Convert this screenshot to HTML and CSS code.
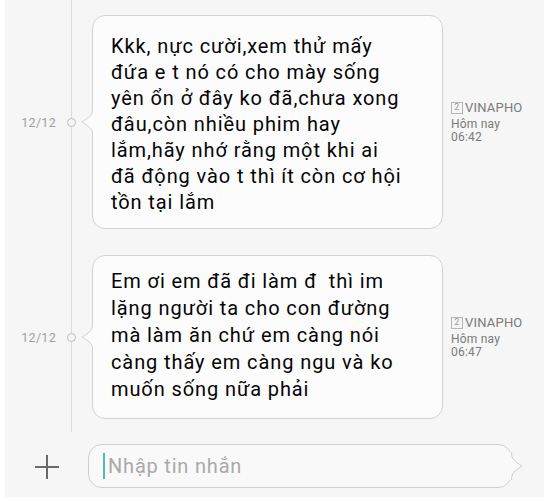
FILE: index.html
```html
<!DOCTYPE html>
<html lang="vi">
<head>
<meta charset="utf-8">
<title>Tin nhắn</title>
<link rel="stylesheet" href="styles.css">
</head>
<body>
<div class="app">
  <div class="thread">
    <div class="row row-first">
      <div class="date">12/12</div>
      <div class="node"><span class="dot"></span></div>
      <div class="bubble bubble-a">
        <svg class="tail" width="13" height="24" viewBox="0 0 13 24"><path d="M11.5 0 C11.5 6 7 8 1 12 C7 16 11.5 18 11.5 24 L13 24 L13 0 Z" fill="#fcfcfc"/><path d="M11.5 0 C11.5 6 7 8 1 12 C7 16 11.5 18 11.5 24" fill="none" stroke="#d2d2d2" stroke-width="1"/></svg>
        <p class="text">Kkk, nực cười,xem thử mấy<br>đứa e t nó có cho mày sống<br>yên ổn ở đây ko đã,chưa xong<br>đâu,còn nhiều phim hay<br>lắm,hãy nhớ rằng một khi ai<br>đã động vào t thì ít còn cơ hội<br>tồn tại lắm</p>
      </div>
      <div class="meta">
        <div class="sim"><span class="sim-num">2</span>VINAPHO</div>
        <div class="when">Hôm nay</div>
        <div class="when">06:42</div>
      </div>
    </div>
    <div class="row row-second">
      <div class="date">12/12</div>
      <div class="node"><span class="dot"></span></div>
      <div class="bubble bubble-b">
        <svg class="tail" width="13" height="24" viewBox="0 0 13 24"><path d="M11.5 0 C11.5 6 7 8 1 12 C7 16 11.5 18 11.5 24 L13 24 L13 0 Z" fill="#fcfcfc"/><path d="M11.5 0 C11.5 6 7 8 1 12 C7 16 11.5 18 11.5 24" fill="none" stroke="#d2d2d2" stroke-width="1"/></svg>
        <p class="text">Em ơi em đã đi làm đ&nbsp;&nbsp;thì im<br>lặng người ta cho con đường<br>mà làm ăn chứ em càng nói<br>càng thấy em càng ngu và ko<br>muốn sống nữa phải</p>
      </div>
      <div class="meta">
        <div class="sim"><span class="sim-num">2</span>VINAPHO</div>
        <div class="when">Hôm nay</div>
        <div class="when">06:47</div>
      </div>
    </div>
  </div>
  <div class="composer">
    <div class="add">
      <svg width="26" height="26" viewBox="0 0 26 26"><path d="M13 1 V25 M1 13 H25" stroke="#6a6a6a" stroke-width="2" fill="none"/></svg>
    </div>
    <div class="input">
      <span class="caret"></span><span class="placeholder">Nhập tin nhắn</span>
      <svg class="input-tail" width="14" height="28" viewBox="0 0 14 28"><path d="M1.5 0 C1.5 7 4 9 12 14 C4 19 1.5 21 1.5 28 L0 28 L0 0 Z" fill="#f9f9f9"/><path d="M1.5 0 C1.5 7 4 9 12 14 C4 19 1.5 21 1.5 28" fill="none" stroke="#cfcfcf" stroke-width="1"/></svg>
    </div>
  </div>
</div>
</body>
</html>
```

FILE: styles.css
```css
* { box-sizing: border-box; }
html, body { margin: 0; padding: 0; background: #ffffff; }
body { font-family: Roboto, "Noto Sans", "Liberation Sans", sans-serif; color: #050505; }

.app {
  margin-left: 5px;
  width: 539px;
  height: 497px;
  background: #f6f6f6;
  display: flex;
  flex-direction: column;
}

.thread {
  height: 432px;
  background: linear-gradient(#dcdcdc, #dcdcdc) no-repeat 66px 0 / 1px 100%;
  display: flex;
  flex-direction: column;
  gap: 26px;
  padding-top: 15px;
}

.row {
  display: grid;
  grid-template-columns: 56px 31px 351px auto;
  align-items: center;
}

.date {
  font-size: 12.5px;
  color: #a0a0a0;
  text-align: right;
  padding-right: 5px;
  letter-spacing: 0.3px;
}

.node { display: flex; }
.dot {
  margin-left: 6px;
  width: 9px;
  height: 9px;
  border-radius: 50%;
  border: 1.5px solid #bdbdbd;
  background: #f6f6f6;
}

.bubble {
  position: relative;
  background: #fcfcfc;
  border: 1px solid #d2d2d2;
  border-radius: 13px;
  padding: 17px 8px 13px 18px;
}
.bubble-b { padding: 12px 8px 15px 18px; }

.tail {
  position: absolute;
  left: -12px;
  top: calc(50% - 12px);
}

.text {
  margin: 0;
  font-size: 20px;
  line-height: 26px;
  letter-spacing: 0.9px;
  white-space: nowrap;
}
.bubble-b .text { line-height: 27px; }

.meta {
  padding-left: 8px;
  color: #7a7a7a;
  letter-spacing: 0.2px;
}
.when {
  font-size: 12px;
  line-height: 13px;
}
.sim {
  display: flex;
  align-items: center;
  gap: 2px;
  font-size: 13px;
  line-height: 14px;
  margin-bottom: 3px;
}
.sim-num {
  display: inline-flex;
  align-items: center;
  justify-content: center;
  width: 12px;
  height: 12px;
  border: 1px solid #b5b5b5;
  font-size: 9px;
  line-height: 1;
  color: #999;
}

.composer {
  flex: 1;
  display: flex;
  align-items: center;
  padding-top: 3px;
}
.add {
  width: 83px;
  display: flex;
  justify-content: center;
  padding-top: 2px;
}
.add svg { display: block; }

.input {
  position: relative;
  width: 424px;
  height: 44px;
  border: 1px solid #cfcfcf;
  border-radius: 14px;
  background: #f9f9f9;
  display: flex;
  align-items: center;
  padding-left: 14px;
}
.caret {
  width: 2px;
  height: 26px;
  background: #4cbfb1;
  margin-right: 3px;
}
.placeholder {
  font-size: 20px;
  color: #a9a9a9;
  letter-spacing: 0.8px;
}
.input-tail {
  position: absolute;
  right: -13px;
  top: calc(50% - 14px);
}
```
